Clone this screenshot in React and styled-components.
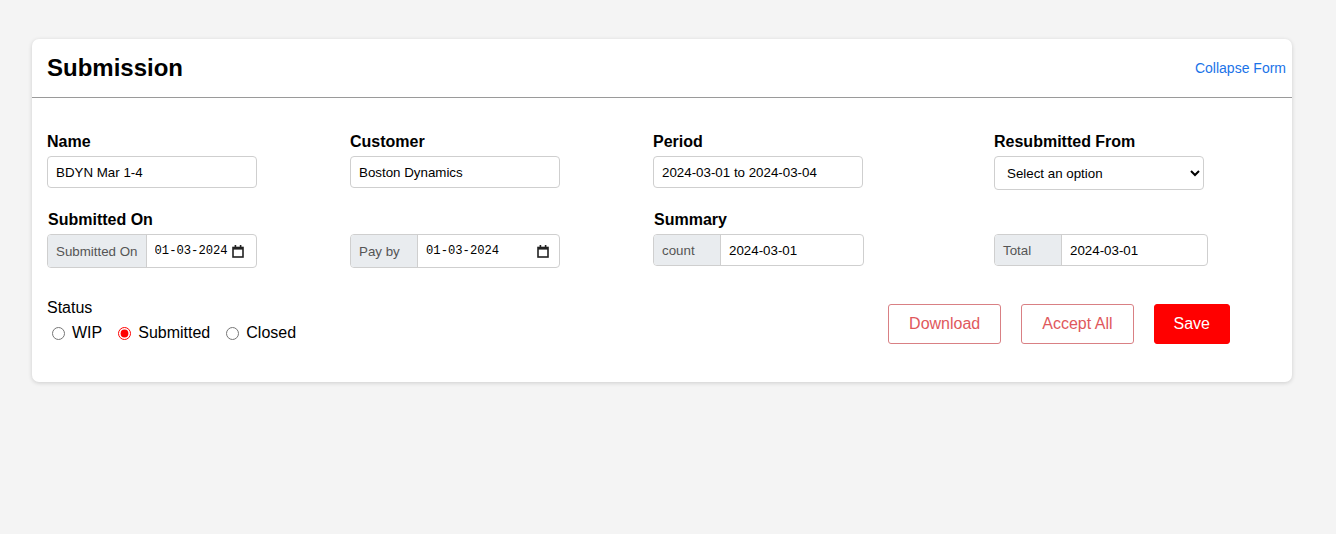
import React from "react";
import styled, { createGlobalStyle } from "styled-components";

const Global = createGlobalStyle`
  html, body { margin: 0; padding: 0; background: #f4f4f4; }
  body { font-family: "Liberation Sans", Arial, sans-serif; color: #000; }
  * { box-sizing: border-box; }
`;

const Page = styled.div`
  padding: 39px 32px;
`;

const Card = styled.section`
  width: 1260px;
  background: #fff;
  border-radius: 7px;
  box-shadow: 0 1px 4px rgba(0, 0, 0, 0.16);
`;

const Header = styled.header`
  height: 59px;
  display: flex;
  align-items: center;
  justify-content: space-between;
  padding: 0 6px 0 15px;
  border-bottom: 1px solid #9a9a9a;
`;

const Title = styled.h2`
  margin: 0;
  font-size: 24px;
  font-weight: 700;
`;

const Link = styled.a`
  font-size: 14px;
  color: #1a73e8;
  text-decoration: none;
  cursor: pointer;
`;

const Body = styled.div`
  padding: 34px 15px 38px;
`;

const Grid = styled.div`
  display: grid;
  grid-template-columns: 303px 303px 341px 1fr;
  row-gap: 20px;
`;

const Field = styled.div`
  display: flex;
  flex-direction: column;
`;

const Label = styled.label`
  font-size: 16px;
  font-weight: 700;
  line-height: 19px;
  height: 19px;
  margin: 0 0 5px ${(p) => (p.$nudge ? "1px" : "0")};
`;

const TextInput = styled.input`
  width: ${(p) => p.$w || 210}px;
  height: 32px;
  border: 1px solid #cfcfcf;
  border-radius: 4px;
  padding: 0 8px;
  font-family: "Liberation Sans", Arial, sans-serif;
  font-size: 13.33px;
  color: #000;
  background: #fff;
  outline: none;
`;

const Select = styled.select`
  width: 210px;
  height: 34px;
  border: 1px solid #cfcfcf;
  border-radius: 4px;
  padding: 0 8px;
  font-family: "Liberation Sans", Arial, sans-serif;
  font-size: 13.33px;
  color: #000;
  background: #fff;
  outline: none;
`;

const Group = styled.div`
  display: flex;
  width: ${(p) => p.$w}px;
  height: ${(p) => p.$h || 32}px;
  border: 1px solid #cfcfcf;
  border-radius: 4px;
  overflow: hidden;
  background: #fff;
`;

const Addon = styled.span`
  display: flex;
  align-items: center;
  min-width: 67px;
  padding: 0 8px;
  background: #e9ecef;
  border-right: 1px solid #cfcfcf;
  font-size: 13.33px;
  color: #555;
  white-space: nowrap;
`;

const GroupInput = styled.input`
  flex: 1;
  min-width: 0;
  border: none;
  padding: ${(p) => (p.$mono ? "0 0 0 8px" : "0 8px")};
  font-family: ${(p) =>
    p.$mono ? '"Liberation Mono", "DejaVu Sans Mono", monospace' : '"Liberation Sans", Arial, sans-serif'};
  font-size: ${(p) => (p.$mono ? "12.2px" : "13.33px")};
  color: #000;
  background: transparent;
  outline: none;
`;

const IconSlot = styled.span`
  display: flex;
  align-items: center;
  padding-right: ${(p) => p.$pr || 12}px;
`;

const Footer = styled.div`
  display: flex;
  justify-content: space-between;
  align-items: flex-start;
  margin-top: 30px;
`;

const Status = styled.div`
  display: flex;
  flex-direction: column;
  padding-top: 1px;
`;

const StatusTitle = styled.div`
  font-size: 16px;
  line-height: 18px;
`;

const Radios = styled.div`
  display: flex;
  align-items: center;
  margin-top: 5px;
  height: 22px;
  gap: 11px;
`;

const RadioLabel = styled.label`
  display: inline-flex;
  align-items: center;
  font-size: 16px;
`;

const Radio = styled.input`
  width: 13px;
  height: 13px;
  margin: 0 7px 0 5px;
  accent-color: #ff0000;
`;

const Actions = styled.div`
  display: flex;
  gap: 20px;
  margin: 6px 47px 0 0;
`;

const Button = styled.button`
  height: 40px;
  padding: 0 ${(p) => (p.$primary ? 19 : 20)}px;
  border-radius: 3px;
  font-family: "Liberation Sans", Arial, sans-serif;
  font-size: 16px;
  cursor: pointer;
  border: 1px solid ${(p) => (p.$primary ? "#ff0000" : "#d98084")};
  background: ${(p) => (p.$primary ? "#ff0000" : "#fff")};
  color: ${(p) => (p.$primary ? "#fff" : "#e0585c")};
`;

const CalendarIcon = () => (
  <svg width="12" height="14" viewBox="0 0 12 14">
    <rect x="1" y="3.5" width="10" height="9.5" fill="none" stroke="#222" strokeWidth="1.6" />
    <rect x="1" y="3" width="10" height="2.6" fill="#222" />
    <rect x="2.6" y="1" width="1.6" height="2.5" fill="#222" />
    <rect x="7.8" y="1" width="1.6" height="2.5" fill="#222" />
  </svg>
);

const DateGroup = ({ addon, w, value, pr }) => (
  <Group $w={w} $h={34}>
    <Addon>{addon}</Addon>
    <GroupInput $mono defaultValue={value} />
    <IconSlot $pr={pr}>
      <CalendarIcon />
    </IconSlot>
  </Group>
);

export default function App() {
  return (
    <>
      <Global />
      <Page>
        <Card>
          <Header>
            <Title>Submission</Title>
            <Link>Collapse Form</Link>
          </Header>
          <Body>
            <Grid>
              <Field>
                <Label>Name</Label>
                <TextInput defaultValue="BDYN Mar 1-4" />
              </Field>
              <Field>
                <Label>Customer</Label>
                <TextInput defaultValue="Boston Dynamics" />
              </Field>
              <Field>
                <Label>Period</Label>
                <TextInput defaultValue="2024-03-01 to 2024-03-04" />
              </Field>
              <Field>
                <Label>Resubmitted From</Label>
                <Select defaultValue="">
                  <option value="">Select an option</option>
                </Select>
              </Field>

              <Field>
                <Label $nudge>Submitted On</Label>
                <DateGroup addon="Submitted On" w={210} value="01-03-2024" pr={12} />
              </Field>
              <Field>
                <Label />
                <DateGroup addon="Pay by" w={210} value="01-03-2024" pr={10} />
              </Field>
              <Field>
                <Label $nudge>Summary</Label>
                <Group $w={211}>
                  <Addon>count</Addon>
                  <GroupInput defaultValue="2024-03-01" />
                </Group>
              </Field>
              <Field>
                <Label />
                <Group $w={214}>
                  <Addon>Total</Addon>
                  <GroupInput defaultValue="2024-03-01" />
                </Group>
              </Field>
            </Grid>

            <Footer>
              <Status>
                <StatusTitle>Status</StatusTitle>
                <Radios>
                  <RadioLabel>
                    <Radio type="radio" name="status" />
                    WIP
                  </RadioLabel>
                  <RadioLabel>
                    <Radio type="radio" name="status" defaultChecked />
                    Submitted
                  </RadioLabel>
                  <RadioLabel>
                    <Radio type="radio" name="status" />
                    Closed
                  </RadioLabel>
                </Radios>
              </Status>
              <Actions>
                <Button>Download</Button>
                <Button>Accept All</Button>
                <Button $primary>Save</Button>
              </Actions>
            </Footer>
          </Body>
        </Card>
      </Page>
    </>
  );
}
